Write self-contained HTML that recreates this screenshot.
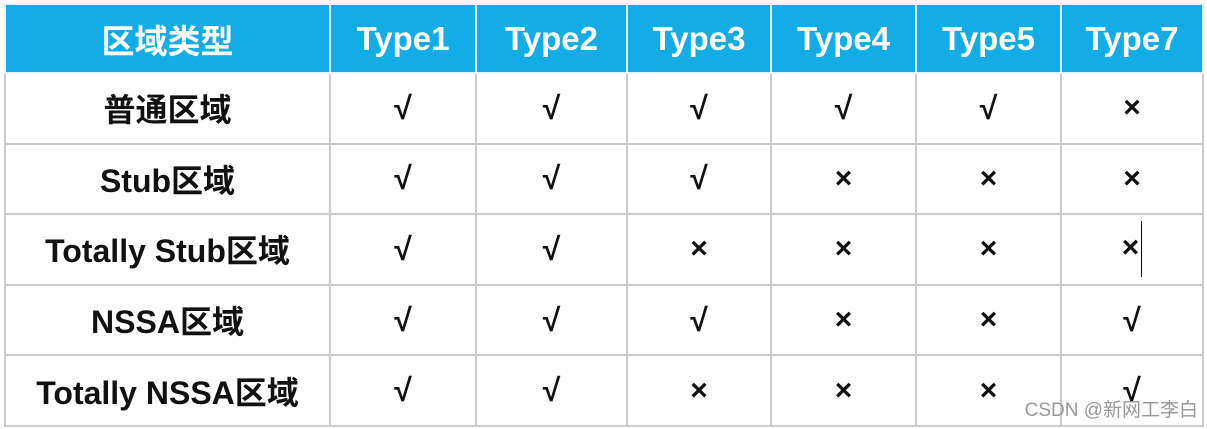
<!DOCTYPE html><html><head><meta charset="utf-8"><style>
body{margin:0;width:1207px;height:429px;background:#fff;position:relative;overflow:hidden;font-family:"Liberation Sans","Noto Sans CJK SC",sans-serif;font-weight:bold}
table{position:absolute;left:4px;top:3px;border-collapse:collapse;}
td{border:2px solid #cbcbcb;text-align:center;padding:0;height:68.6px;font-size:32px;color:#111}
tr.h td{background:#12ace6;color:#fff;font-size:33px;height:67px;border-color:#e8f4fa}
.x{font-size:30px}
.wm{position:absolute;right:9px;bottom:7px;font-weight:normal;font-size:19px;color:#999;font-family:"Liberation Sans","Noto Sans CJK SC",sans-serif}
</style></head><body>
<table>
<colgroup><col style="width:325px"><col style="width:146px"><col style="width:151px"><col style="width:144px"><col style="width:145px"><col style="width:145px"><col style="width:142px"></colgroup>
<tr class="h"><td>区域类型</td><td>Type1</td><td>Type2</td><td>Type3</td><td>Type4</td><td>Type5</td><td>Type7</td></tr>
<tr><td>普通区域</td><td>√</td><td>√</td><td>√</td><td>√</td><td>√</td><td class="x">×</td></tr>
<tr><td>Stub区域</td><td>√</td><td>√</td><td>√</td><td class="x">×</td><td class="x">×</td><td class="x">×</td></tr>
<tr><td>Totally Stub区域</td><td>√</td><td>√</td><td class="x">×</td><td class="x">×</td><td class="x">×</td><td class="x">×<span style="display:inline-block;width:1px;height:56px;background:#000;vertical-align:middle;margin-left:2px"></span></td></tr>
<tr><td>NSSA区域</td><td>√</td><td>√</td><td>√</td><td class="x">×</td><td class="x">×</td><td>√</td></tr>
<tr><td>Totally NSSA区域</td><td>√</td><td>√</td><td class="x">×</td><td class="x">×</td><td class="x">×</td><td>√</td></tr>
</table>
<div class="wm">CSDN @新网工李白</div>
</body></html>
